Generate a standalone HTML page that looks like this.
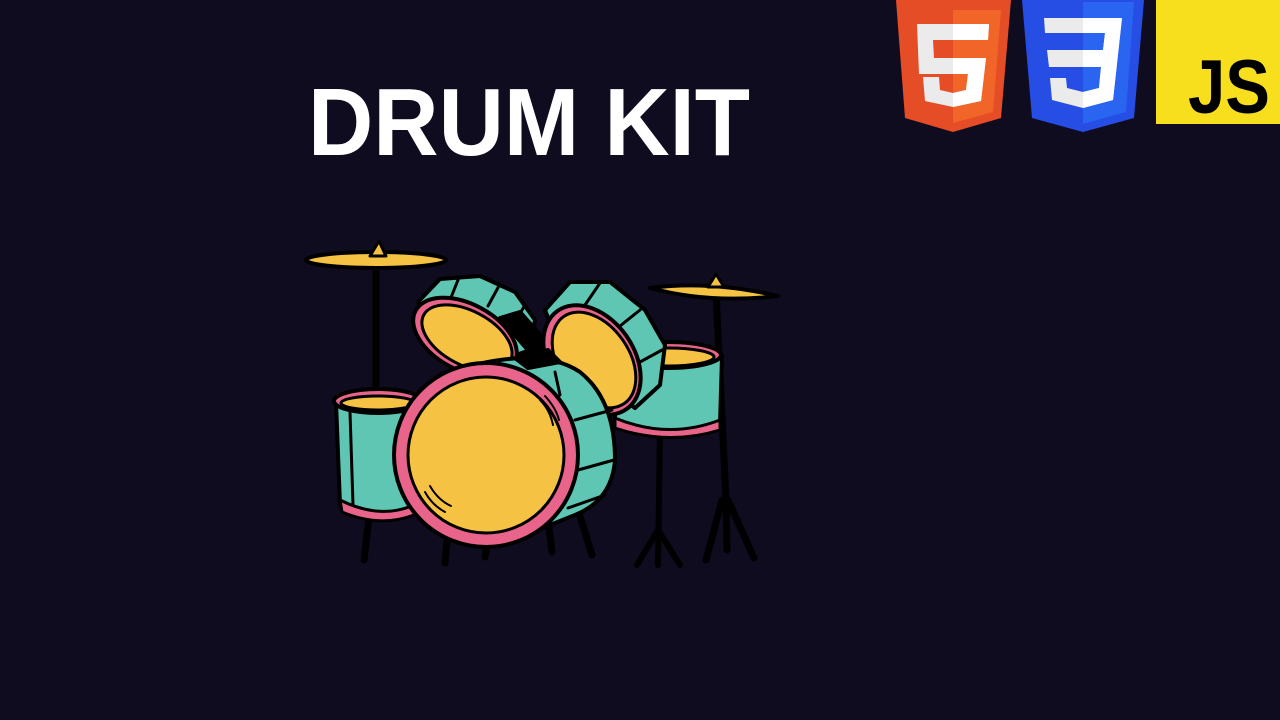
<!DOCTYPE html>
<html><head><style>
html,body{margin:0;padding:0;background:#0f0c1f;width:1280px;height:720px;overflow:hidden}
svg{display:block}
</style></head><body>
<svg width="1280" height="720" viewBox="0 0 1280 720" xmlns="http://www.w3.org/2000/svg">
<rect width="1280" height="720" fill="#0f0c1f"/>
<text x="308" y="155" textLength="442" lengthAdjust="spacingAndGlyphs" font-family="Liberation Sans, sans-serif" font-weight="bold" font-size="96" fill="#fff">DRUM KIT</text>

<!-- HTML5 -->
<path d="M896 0 L1011 0 L1001 118 L953 132 L905 118 Z" fill="#e44d26"/>
<path d="M953 10 L1001 10 L993 112 L953 123 Z" fill="#f16529"/>
<path d="M917 24 L989 24 L988 40 L933 40 L934 58 L986 58 L981 101 L953 107 L925 101 L923 77 L939 77 L940 90 L953 93 L966 90 L968 74 L919 74 Z" fill="#ebebeb"/>
<path d="M953 24 L989 24 L988 40 L953 40 Z M953 58 L986 58 L981 101 L953 107 L953 93 L966 90 L968 74 L953 74 Z" fill="#fff"/>
<!-- CSS3 -->
<path d="M1022 0 L1144 0 L1134 118 L1083 132 L1032 118 Z" fill="#264de4"/>
<path d="M1083 2 L1134 2 L1126 112 L1083 124 Z" fill="#2965f1"/>
<path d="M1044 18 L1122 18 L1113 100 L1083 108 L1052 100 L1050 78 L1066 78 L1067 88 L1083 92 L1099 88 L1101 67 L1049 67 L1047 50 L1103 50 L1105 33 L1045 33 Z" fill="#ebebeb"/>
<path d="M1083 18 L1122 18 L1113 100 L1083 108 L1083 92 L1099 88 L1101 67 L1083 67 L1083 50 L1103 50 L1105 33 L1083 33 Z" fill="#fff"/>
<!-- JS -->
<rect x="1156" y="0" width="124" height="124" fill="#f7df1e"/>
<text x="1188" y="113" textLength="82" lengthAdjust="spacingAndGlyphs" font-family="Liberation Sans, sans-serif" font-weight="bold" font-size="76" fill="#000">JS</text>

<g stroke="#000" stroke-width="4" stroke-linejoin="round" stroke-linecap="round">
<!-- stands -->
<line x1="376" y1="260" x2="376" y2="395" stroke-width="7"/>
<path d="M716 292 L726 500 M722 500 L706 560 M726 500 L727 550 M728 500 L754 558" stroke-width="7" fill="none"/>
<path d="M660 430 L658 565 M658 530 L637 565 M658 530 L680 565" stroke-width="6" fill="none"/>
<path d="M370 510 L364 560 M448 530 L445 563 M488 540 L485 557 M548 520 L552 552 M575 500 L592 555" stroke-width="7" fill="none"/>
<!-- cymbals -->
<ellipse cx="376" cy="260" rx="70" ry="8" fill="#f5c244"/>
<path d="M370 256 L379 241 L386 256 Z" fill="#f5c244" stroke-width="3"/>
<path d="M650 288 Q710 280 778 296 Q710 304 650 288 Z" fill="#f5c244"/>
<path d="M708 287 L716 274 L724 287 Z" fill="#f5c244" stroke-width="3"/>
<!-- right tom behind -->
<path d="M615 356 L615 425 Q668 440 720 425 L722 356 Z" fill="#5ec6b2"/>
<path d="M615 418 Q668 440 720 420 L720 430 Q668 446 615 428 Z" fill="#e8648a" stroke-width="3"/>
<ellipse cx="668" cy="355" rx="53" ry="13" fill="#e8648a"/>
<ellipse cx="668" cy="357" rx="46" ry="9" fill="#f5c244" stroke-width="3"/>
<!-- left floor tom -->
<path d="M336 402 L340 505 Q380 525 412 510 L420 402 Z" fill="#5ec6b2"/>
<line x1="350" y1="412" x2="353" y2="505" stroke-width="3"/>
<path d="M340 500 Q380 520 414 505 L414 515 Q380 528 342 512 Z" fill="#e8648a" stroke-width="3"/>
<ellipse cx="378" cy="401" rx="44" ry="12" fill="#e8648a"/>
<ellipse cx="378" cy="403" rx="37" ry="7" fill="#f5c244" stroke-width="3"/>
<!-- upper left tom -->
<path d="M418 302 L440 279 L480 276 L515 292 L535 320 L530 350 L470 372 Z" fill="#5ec6b2"/>
<path d="M458 280 L450 300 M500 284 L488 306 M525 305 L515 322" fill="none" stroke-width="3"/>
<ellipse cx="465" cy="337" rx="56" ry="33" transform="rotate(28 465 337)" fill="#e8648a"/>
<ellipse cx="467" cy="338" rx="49" ry="27" transform="rotate(28 467 338)" fill="#f5c244" stroke-width="3"/>
<path d="M500 318 L520 312 L558 355 L540 364 Z" fill="#000"/>
<!-- upper right tom -->
<path d="M545 310 L570 282 L610 282 L645 310 L665 345 L660 385 L635 408 L560 350 Z" fill="#5ec6b2"/>
<path d="M600 283 L585 305 M640 310 L615 330 M662 350 L640 362" fill="none" stroke-width="3"/>
<ellipse cx="592" cy="360" rx="42" ry="60" transform="rotate(-35 592 360)" fill="#e8648a"/>
<ellipse cx="594" cy="360" rx="35" ry="53" transform="rotate(-35 594 360)" fill="#f5c244" stroke-width="3"/>
<!-- bass drum shell -->
<path d="M455 370 Q540 345 580 372 Q615 400 615 460 Q612 500 575 515 L500 545 L460 420 Z" fill="#5ec6b2"/>
<path d="M555 372 L560 395 M575 420 L612 410 M578 470 L614 460 M568 508 L605 495" fill="none" stroke-width="3"/>
<path d="M515 358 L548 350 L560 362 L528 368 Z" fill="#000"/>
<circle cx="486" cy="455" r="92" fill="#e8648a"/>
<circle cx="486" cy="455" r="78" fill="#f5c244" stroke-width="3"/>
<path d="M540 400 Q550 410 553 425 M545 396 Q556 408 559 420 M425 492 Q432 505 445 512 M430 486 Q438 500 451 506" fill="none" stroke-width="2"/>
</g>
</svg>
</body></html>
